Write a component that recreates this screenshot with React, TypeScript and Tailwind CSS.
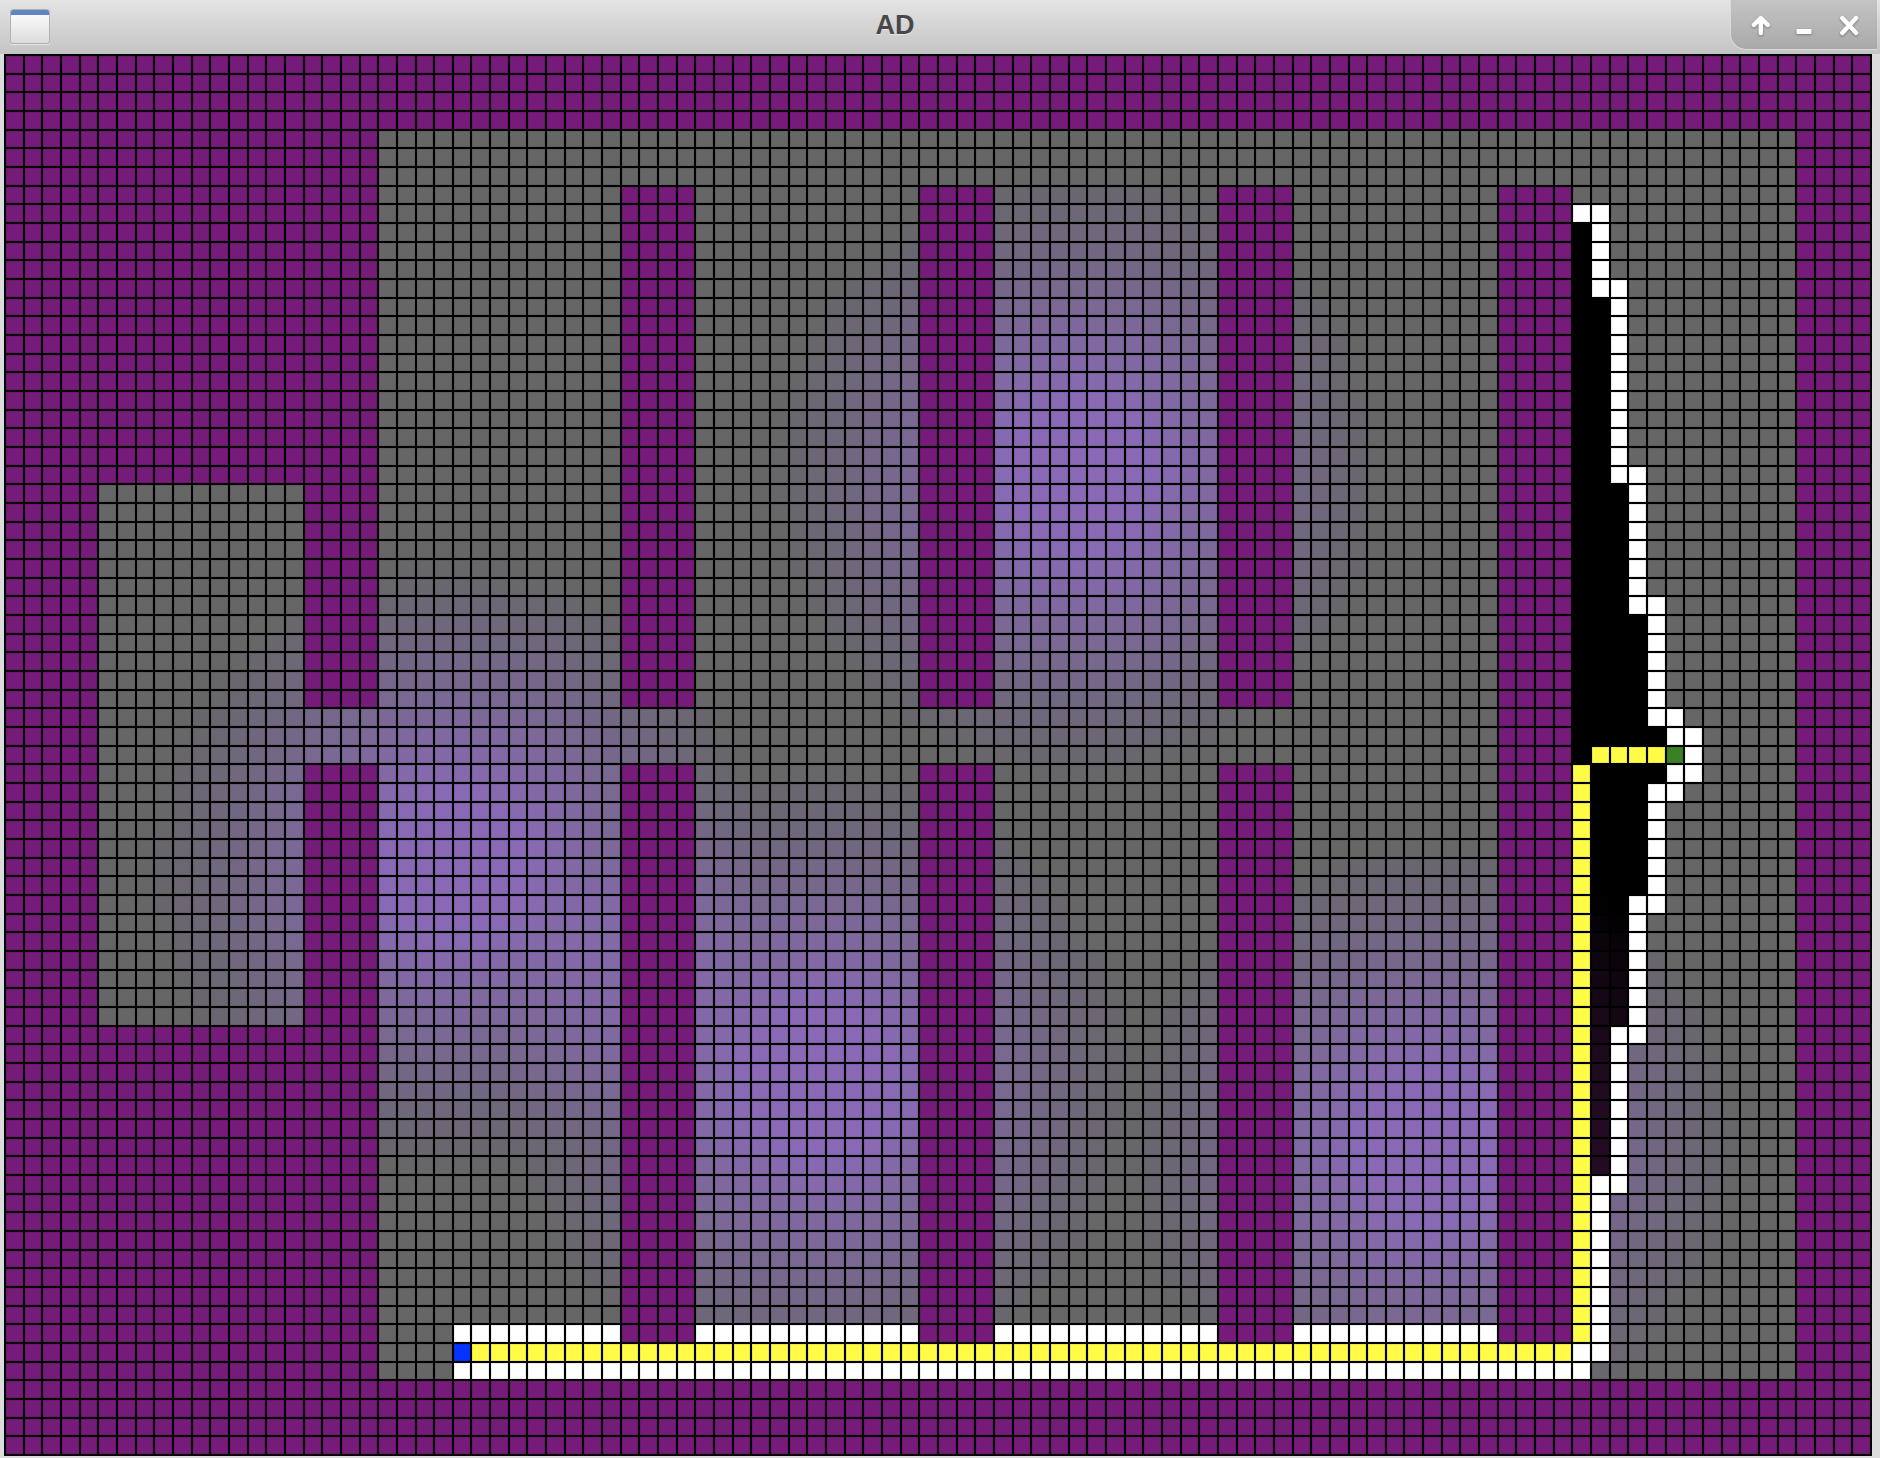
import React from 'react';

const COLS = 100;
const ROWS = 75;

// light pools on the floor: col, row, radius
const LIGHTS = [
    { c: 57, r: 22, rad: 16.5 },
    { c: 23.6, r: 43, rad: 16.5 },
    { c: 43.2, r: 54.5, rad: 17 },
    { c: 76, r: 58, rad: 16.5 },
];

const lightAt = (c: number, r: number) => {
    let total = 0;
    for (const l of LIGHTS) {
        const d = Math.hypot(c - l.c, r - l.r);
        total += Math.max(0, 1 - d / l.rad) * 1.3;
    }
    return Math.min(1, total);
};

const isFloor = (c: number, r: number) =>
    (c >= 20 && c <= 95 && r >= 4 && r <= 70) ||
    (c >= 5 && c <= 15 && r >= 23 && r <= 51) ||
    (c >= 16 && c <= 19 && r >= 35 && r <= 37);

const isWall = (c: number, r: number) => {
    if (c >= 80 && c <= 83) return r >= 7 && r <= 68;
    const inColumn = (c >= 33 && c <= 36) || (c >= 49 && c <= 52) || (c >= 65 && c <= 68);
    return inColumn && ((r >= 7 && r <= 34) || (r >= 38 && r <= 68));
};

// visited cells down the right hand side, by row
const whiteByRow = (r: number): number[] => {
    if (r === 8) return [84, 85];
    if (r >= 9 && r <= 11) return [85];
    if (r === 12) return [85, 86];
    if (r >= 13 && r <= 21) return [86];
    if (r === 22) return [86, 87];
    if (r >= 23 && r <= 28) return [87];
    if (r === 29) return [87, 88];
    if (r >= 30 && r <= 34) return [88];
    if (r === 35) return [88, 89];
    if (r === 36) return [89, 90];
    if (r === 37) return [90];
    if (r === 38) return [89, 90];
    if (r === 39) return [88, 89];
    if (r >= 40 && r <= 44) return [88];
    if (r === 45) return [87, 88];
    if (r >= 46 && r <= 51) return [87];
    if (r === 52) return [86, 87];
    if (r >= 53 && r <= 59) return [86];
    if (r === 60) return [85, 86];
    if (r >= 61 && r <= 69) return [85];
    return [];
};

const cellLook = (c: number, r: number): { cls: string; color?: string } => {
    if (!isFloor(c, r)) return { cls: 'bg-[#761b79]' };
    if (r === 69 && c === 24) return { cls: 'bg-[#0433ff]' };
    if (r === 37 && c === 89) return { cls: 'bg-[#3b8024]' };
    if (r === 69 && c >= 25 && c <= 83) return { cls: 'bg-[#fffb47]' };
    if (c === 84 && r >= 38 && r <= 68) return { cls: 'bg-[#fffb47]' };
    if (r === 37 && c >= 85 && c <= 88) return { cls: 'bg-[#fffb47]' };
    if (r === 70 && c >= 24 && c <= 84) return { cls: 'bg-white' };
    if (r === 69 && c === 84) return { cls: 'bg-white' };
    if (isWall(c, r)) return { cls: 'bg-[#761b79]' };
    if (r === 68 && c >= 24 && c <= 79) return { cls: 'bg-white' };

    const white = whiteByRow(r);
    if (white.includes(c)) return { cls: 'bg-white' };
    const start = r >= 38 ? 85 : 84;
    if (white.length > 0 && r >= 9 && r <= 59 && c >= start && c < white[0]) {
        const i = lightAt(c, r);
        if (i <= 0) return { cls: 'bg-black' };
        return { cls: '', color: `rgb(${Math.round(60 * i)},${Math.round(20 * i)},${Math.round(60 * i)})` };
    }

    const i = lightAt(c, r);
    if (i <= 0) return { cls: 'bg-[#666666]' };
    const mix = (from: number, to: number) => Math.round(from + (to - from) * i);
    return { cls: '', color: `rgb(${mix(102, 137)},${mix(102, 105)},${mix(102, 181)})` };
};

const Board: React.FC = () => {
    const cells = [];
    for (let r = 0; r < ROWS; r++) {
        for (let c = 0; c < COLS; c++) {
            const look = cellLook(c, r);
            cells.push(
                <div
                    key={`${c}-${r}`}
                    className={`shadow-[inset_0_0_0_1px_rgba(0,0,0,0.08)] ${look.cls}`}
                    style={look.color ? { backgroundColor: look.color } : undefined}
                />
            );
        }
    }
    return (
        <div className="grid h-[1402px] w-[1868px] grid-cols-[repeat(100,minmax(0,1fr))] grid-rows-[repeat(75,minmax(0,1fr))] gap-[2px] bg-black p-[2px]">
            {cells}
        </div>
    );
};

const WindowIcon = () => (
    <div className="h-[35px] w-[40px] overflow-hidden rounded-[3px] border border-[#b0b0b0] bg-gradient-to-b from-white to-[#dcdcdc] shadow-[0_1px_1px_rgba(255,255,255,0.6)]">
        <div className="h-[5px] bg-[#5f86c2]" />
    </div>
);

const TitleBar = () => (
    <div className="flex h-[54px] items-stretch bg-gradient-to-b from-[#e4e4e4] to-[#c4c4c4]">
        <div className="flex w-[60px] items-start pl-[10px] pt-[9px]">
            <WindowIcon />
        </div>
        <div className="flex flex-1 items-center justify-center pb-[3px] text-[27px] font-bold text-[#484848] [font-family:'Liberation_Sans',Arial,sans-serif] [text-shadow:0_1px_0_rgba(255,255,255,0.5)]">
            AD
        </div>
        <div className="relative mb-[4px] mr-[3px] flex w-[147px] items-center rounded-bl-[16px] border-b border-l border-[#dadada] bg-gradient-to-b from-[#c4c4c4] to-[#a9a9a9]">
            <svg width="147" height="50" viewBox="0 0 147 50" fill="none" className="drop-shadow-[0_1px_1px_rgba(0,0,0,0.35)]">
                <path d="M30 20 L30 33 M23 25 L30 18 L37 25" stroke="#fff" strokeWidth="4.5" strokeLinecap="round" strokeLinejoin="round" />
                <rect x="66" y="29" width="15" height="5" rx="1" fill="#fff" />
                <path d="M112 18 L126 33 M126 18 L112 33" stroke="#fff" strokeWidth="4.5" strokeLinecap="round" />
            </svg>
        </div>
    </div>
);

export default function App() {
    return (
        <div className="flex h-[1458px] w-[1880px] flex-col overflow-hidden bg-[#dcdcdc]">
            <TitleBar />
            <div className="pl-[4px]">
                <Board />
            </div>
        </div>
    );
}
